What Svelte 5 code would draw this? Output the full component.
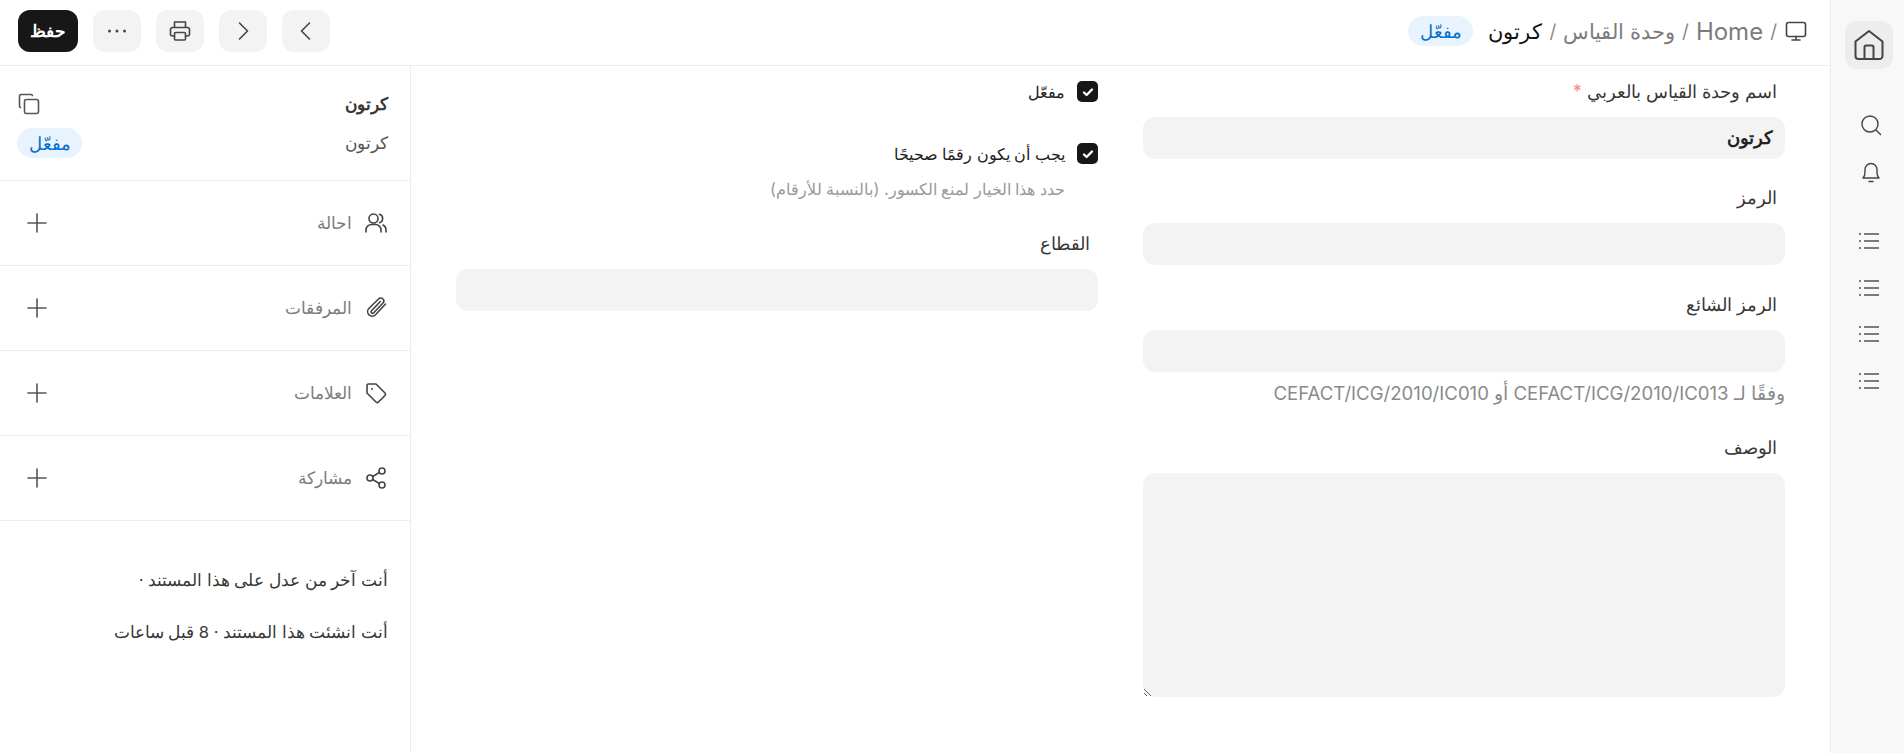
<script lang="ts">
  const crumbs = [
    { text: 'Home', latin: true },
    { text: 'وحدة القياس', latin: false }
  ];
  const lists = [1, 2, 3, 4];
  const sections = [
    { key: 'users', label: 'احالة' },
    { key: 'clip', label: 'المرفقات' },
    { key: 'tag', label: 'العلامات' },
    { key: 'share', label: 'مشاركة' }
  ];
</script>

<div class="page" dir="rtl">
  <nav class="rail">
    <div class="home">
      <svg viewBox="0 0 32 32" width="32" height="32"><path d="M2.500 12.500L16 2l13.500 10.500V27a3 3 0 0 1-3 3h-21a3 3 0 0 1-3-3z"/><path d="M11.500 30V18a1.500 1.500 0 0 1 1.500-1.500h6a1.500 1.500 0 0 1 1.500 1.500v12"/></svg>
    </div>
    <svg class="rail-ico search" viewBox="0 0 24 24" width="24" height="24"><circle cx="11" cy="11" r="8"/><path d="M17 17l4.500 4.500"/></svg>
    <svg class="rail-ico bell" viewBox="0 0 24 24" width="24" height="24"><path d="M4 18c1.500-1.500 2-3 2-5.500V9.500a6 6 0 0 1 12 0v3c0 2.500.5 4 2 5.500zM10 21.500h4"/></svg>
    <div class="lists">
      {#each lists as l}
        <svg viewBox="0 0 24 24" width="24" height="24"><path class="bars" d="M7 5h15M7 12h15M7 19h15"/><path class="bullets" d="M2 5h2M2 12h2M2 19h2"/></svg>
      {/each}
    </div>
  </nav>

  <div class="main">
    <header class="topbar">
      <div class="crumbs">
        <svg viewBox="0 0 24 24" width="24" height="24"><rect x="2.500" y="3.500" width="19" height="14" rx="2"/><path d="M12 17.500v3.500M8 21h8"/></svg>
        {#each crumbs as c}
          <span class="sep">/</span>
          <span class="crumb" class:latin={c.latin}>{c.text}</span>
        {/each}
        <span class="sep">/</span>
        <span class="crumb current">كرتون</span>
        <span class="pill head-pill">مفعّل</span>
      </div>
      <div class="actions">
        <button class="icon-btn" aria-label="prev"><svg viewBox="0 0 24 24" width="24" height="24"><path d="M15.500 4l-8 8 8 8"/></svg></button>
        <button class="icon-btn" aria-label="next"><svg viewBox="0 0 24 24" width="24" height="24"><path d="M8.500 4l8 8-8 8"/></svg></button>
        <button class="icon-btn" aria-label="print"><svg viewBox="0 0 24 24" width="24" height="24"><path d="M6.500 8.500V3h11v5.500M6.500 17H4.500a2 2 0 0 1-2-2v-4.500a2 2 0 0 1 2-2h15a2 2 0 0 1 2 2V15a2 2 0 0 1-2 2h-2"/><rect x="6.500" y="13.500" width="11" height="7.500" rx="1"/></svg></button>
        <button class="icon-btn" aria-label="more"><svg viewBox="0 0 24 24" width="24" height="24"><circle class="dot" cx="4.500" cy="12" r="1.500"/><circle class="dot" cx="12" cy="12" r="1.500"/><circle class="dot" cx="19.500" cy="12" r="1.500"/></svg></button>
        <button class="save">حفظ</button>
      </div>
    </header>

    <div class="body">
      <section class="form">
        <div class="col">
          <div class="field first">
            <span class="label">اسم وحدة القياس بالعربي <em>*</em></span>
            <div class="input value">كرتون</div>
          </div>
          <div class="field">
            <span class="label">الرمز</span>
            <div class="input"></div>
          </div>
          <div class="field third">
            <span class="label">الرمز الشائع</span>
            <div class="input"></div>
            <p class="hint wide">وفقًا لـ CEFACT/ICG/2010/IC013 أو CEFACT/ICG/2010/IC010</p>
          </div>
          <div class="field after-hint">
            <span class="label">الوصف</span>
            <textarea class="input area"></textarea>
          </div>
        </div>
        <div class="col">
          <label class="check first-check"><span class="box"><svg viewBox="0 0 20 20" width="20" height="20"><path d="M6 10.500l2.600 2.500L14 7.500"/></svg></span>مفعّل</label>
          <label class="check second-check"><span class="box"><svg viewBox="0 0 20 20" width="20" height="20"><path d="M6 10.500l2.600 2.500L14 7.500"/></svg></span>يجب أن يكون رقمًا صحيحًا</label>
          <p class="hint indent">حدد هذا الخيار لمنع الكسور. (بالنسبة للأرقام)</p>
          <div class="field sector">
            <span class="label">القطاع</span>
            <div class="input"></div>
          </div>
        </div>
      </section>

      <aside class="side">
        <div class="summary">
          <div class="sum-row">
            <strong>كرتون</strong>
            <svg class="copy" viewBox="0 0 24 24" width="24" height="24"><rect x="7.500" y="7.500" width="14" height="14" rx="2"/><path d="M3.500 15.500a1.500 1.500 0 0 1-1-1.500V4a1.500 1.500 0 0 1 1.500-1.500h10a1.500 1.500 0 0 1 1.500 1"/></svg>
          </div>
          <div class="sum-row">
            <span class="sum-value">كرتون</span>
            <span class="pill">مفعّل</span>
          </div>
        </div>

        {#each sections as s}
          <div class="sec">
            <span class="sec-name">
              <svg viewBox="0 0 24 24" width="24" height="24">
                {#if s.key === 'users'}
                  <circle cx="9.500" cy="7.500" r="4.500"/><path d="M2 21v-2a5.500 5.500 0 0 1 5.500-5.500h4A5.500 5.500 0 0 1 17 19v2M15.500 3.200a4.500 4.500 0 0 1 0 8.600M19 14a5.500 5.500 0 0 1 3 5v2"/>
                {:else if s.key === 'clip'}
                  <path d="M21.500 8l-10 10.800a4.600 4.600 0 0 1-6.700-6.300L14.500 3a3 3 0 0 1 4.500 4L9.500 17a1.500 1.500 0 0 1-2.200-2l9-9.500"/>
                {:else if s.key === 'tag'}
                  <path d="M3 4.500A1.500 1.500 0 0 1 4.500 3H12l9 9a1.800 1.800 0 0 1 0 2.500L14.500 21a1.800 1.800 0 0 1-2.500 0l-9-9z"/><circle class="dot" cx="8" cy="8" r="1"/>
                {:else}
                  <circle cx="18" cy="5" r="3"/><circle cx="6" cy="12" r="3"/><circle cx="18" cy="19" r="3"/><path d="M8.600 10.500l6.800-4M8.600 13.500l6.800 4"/>
                {/if}
              </svg>
              {s.label}
            </span>
            <svg class="plus" viewBox="0 0 24 24" width="24" height="24"><path d="M12 3v18M3 12h18"/></svg>
          </div>
        {/each}

        <div class="activity">
          <p>أنت آخر من عدل على هذا المستند ·</p>
          <p>أنت انشئت هذا المستند · 8 قبل ساعات</p>
        </div>
      </aside>
    </div>
  </div>
</div>

<style>
  :global(body) { margin: 0; background: #fff; }
  .page {
    display: flex;
    height: 753px;
    overflow: hidden;
    font-family: Inter, sans-serif;
    color: #383838;
  }
  svg { fill: none; stroke: #444; stroke-width: 1.6; stroke-linecap: round; stroke-linejoin: round; flex: none; }
  svg .dot { fill: #444; stroke: none; }

  .rail {
    width: 70px;
    flex: none;
    background: #f8f8f8;
    border-left: 1px solid #ededed;
    display: flex;
    flex-direction: column;
    align-items: center;
    padding: 21px 0 0 3px;
  }
  .home {
    width: 48px;
    height: 48px;
    border-radius: 12px;
    background: #ededed;
    display: flex;
    align-items: center;
    justify-content: center;
  }
  .home svg { stroke-width: 2; }
  .rail-ico { stroke-width: 1.4; margin-left: 4px; }
  .search { margin-top: 44px; }
  .bell { margin-top: 23px; }
  .lists { display: flex; flex-direction: column; gap: 22.700px; margin-top: 45px; }
  .lists path { stroke: #7c7c7c; stroke-width: 1.8; stroke-linecap: butt; }

  .main { flex: 1; min-width: 0; display: flex; flex-direction: column; }
  .topbar {
    height: 66px;
    box-sizing: border-box;
    border-bottom: 1px solid #ededed;
    display: flex;
    align-items: flex-start;
    justify-content: space-between;
    padding: 10px 22px 0 18px;
  }
  .crumbs { display: flex; align-items: center; height: 42px; gap: 7px; font-size: 20.500px; }
  .sep { color: #8a8a8a; font-size: 19px; }
  .crumb { color: #7c7c7c; }
  .crumb.latin { font-size: 24px; }
  .crumb.current { color: #111; }
  .pill {
    display: inline-flex;
    align-items: center;
    justify-content: center;
    width: 65px;
    height: 30px;
    border-radius: 15px;
    background: #e9f3fd;
    color: #0070cc;
    font-size: 17.500px;
  }
  .head-pill { margin-right: 8px; }
  .actions { display: flex; gap: 15px; }
  .icon-btn {
    width: 48px;
    height: 42px;
    padding: 0;
    border: 0;
    border-radius: 12px;
    background: #f3f3f3;
    display: flex;
    align-items: center;
    justify-content: center;
  }
  .save {
    width: 60px;
    height: 42px;
    padding: 0;
    border: 0;
    border-radius: 12px;
    background: #171717;
    color: #fff;
    font: 600 17px Inter, sans-serif;
  }

  .body { flex: 1; min-height: 0; display: flex; }
  .form {
    flex: 1;
    display: grid;
    grid-template-columns: 642px 642px;
    gap: 45px;
    align-items: start;
    padding: 0 45px 0 0;
  }
  .col { min-width: 0; }
  .field { margin-top: 26px; }
  .field.first { margin-top: 13px; }
  .field.third { margin-top: 27px; }
  .label { display: block; height: 26px; line-height: 26px; padding-right: 8px; font-size: 18px; margin-bottom: 12px; }
  .label em { color: #f08a8a; font-style: normal; }
  .input {
    display: block;
    box-sizing: border-box;
    width: 100%;
    height: 42px;
    border: 0;
    border-radius: 12px;
    background: #f3f3f3;
    padding: 0 12px;
    line-height: 42px;
    font-size: 18px;
  }
  .value { font-weight: 600; color: #222; }
  .area { height: 224px; font: inherit; }
  .hint { margin: 10px 0 0; font-size: 16.300px; line-height: 22px; color: #999; }
  .hint.wide { font-size: 18.600px; color: #8a8a8a; }
  .hint.indent { padding-right: 33px; margin-top: 14px; }
  .field.after-hint { margin-top: 31px; }
  .check { display: flex; align-items: center; gap: 12px; font-size: 16.300px; color: #222; }
  .first-check { margin-top: 15px; }
  .second-check { margin-top: 41px; }
  .box {
    width: 21px;
    height: 21px;
    border-radius: 5px;
    background: #171717;
    display: flex;
    align-items: center;
    justify-content: center;
  }
  .box svg { stroke: #fff; stroke-width: 2.400; }
  .field.sector { margin-top: 31px; }

  .side { width: 411px; flex: none; box-sizing: border-box; border-right: 1px solid #ededed; }
  .summary { height: 115px; box-sizing: border-box; border-bottom: 1px solid #ededed; padding: 0 22px 0 17px; }
  .sum-row { display: flex; align-items: center; justify-content: space-between; font-size: 17px; }
  .sum-row:first-child { padding-top: 26px; height: 24px; }
  .sum-row:last-child { margin-top: 12px; height: 30px; }
  .sum-value { color: #555; }
  .sum-row .copy { stroke: #555; }
  .sec {
    height: 85px;
    box-sizing: border-box;
    border-bottom: 1px solid #ededed;
    display: flex;
    align-items: center;
    justify-content: space-between;
    padding: 0 22px 0 25px;
  }
  .sec-name { display: flex; align-items: center; gap: 12px; color: #7c7c7c; font-size: 17px; }
  .plus { stroke: #555; }
  .activity { padding: 46px 22px 0; font-size: 16.500px; }
  .activity p { margin: 0 0 26px; line-height: 26px; }
</style>
